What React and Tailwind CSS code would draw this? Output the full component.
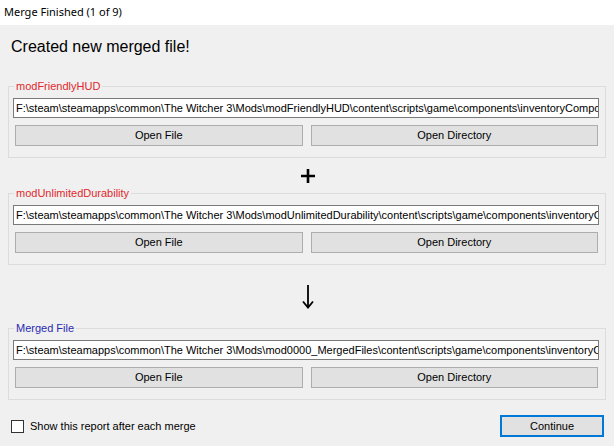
import React, { useState } from "react";

const groups = [
  {
    label: "modFriendlyHUD",
    color: "text-[#e0282e]",
    path: "F:\\steam\\steamapps\\common\\The Witcher 3\\Mods\\modFriendlyHUD\\content\\scripts\\game\\components\\inventoryCompo",
  },
  {
    label: "modUnlimitedDurability",
    color: "text-[#e0282e]",
    path: "F:\\steam\\steamapps\\common\\The Witcher 3\\Mods\\modUnlimitedDurability\\content\\scripts\\game\\components\\inventoryC",
  },
  {
    label: "Merged File",
    color: "text-[#2a2ab0]",
    path: "F:\\steam\\steamapps\\common\\The Witcher 3\\Mods\\mod0000_MergedFiles\\content\\scripts\\game\\components\\inventoryC",
  },
];

function FileGroup({ group }) {
  return (
    <div className="relative mx-[8px] border border-[#dcdcdc] pt-[11px] pb-[11px]">
      <span
        className={`absolute left-[5px] top-[-8px] bg-[#f0f0f0] px-[2px] text-[11px] leading-[14px] ${group.color}`}
      >
        {group.label}
      </span>
      <div className="ml-[4px] mr-[6px] h-[20px] overflow-hidden whitespace-nowrap border border-[#7a7a7a] bg-white pl-[2px] text-[11px] leading-[18px] text-black">
        {group.path}
      </div>
      <div className="mt-[7px] flex gap-[8px] pl-[6px] pr-[7px]">
        <button className="h-[21px] flex-1 border border-[#adadad] bg-[#e1e1e1] text-[11px] text-black">
          Open File
        </button>
        <button className="h-[21px] flex-1 border border-[#adadad] bg-[#e1e1e1] text-[11px] text-black">
          Open Directory
        </button>
      </div>
    </div>
  );
}

export default function App() {
  const [showReport, setShowReport] = useState(false);

  return (
    <div
      className="h-[446px] w-[614px] overflow-hidden bg-[#f0f0f0] text-black"
      style={{ fontFamily: '"Liberation Sans", Arial, sans-serif' }}
    >
      {/* Title bar */}
      <div
        className="flex h-[25px] items-center bg-white pl-[4px] text-[11px]"
        style={{ fontFamily: '"Noto Sans", "Open Sans", sans-serif' }}
      >
        Merge Finished (1 of 9)
      </div>

      {/* Heading */}
      <div className="h-[61px] pl-[11px] pt-[12px] text-[16px] leading-[20px]">
        Created new merged file!
      </div>

      <FileGroup group={groups[0]} />

      <div className="flex h-[35px] items-center justify-center pl-[1px]">
        <svg width="14" height="14" viewBox="0 0 14 14">
          <path d="M7 0v14M0 7h14" stroke="#000" strokeWidth="2.6" />
        </svg>
      </div>

      <FileGroup group={groups[1]} />

      <div className="flex h-[63px] items-center justify-center pl-[1px]">
        <svg width="14" height="24" viewBox="0 0 14 24">
          <path d="M7 0v22" stroke="#000" strokeWidth="1.8" />
          <path d="M2 16.5l5 6 5-6" stroke="#000" strokeWidth="1.8" fill="none" />
        </svg>
      </div>

      <FileGroup group={groups[2]} />

      {/* Footer */}
      <div className="mt-[15px] flex items-center justify-between pl-[11px] pr-[10px]">
        <label className="flex items-center gap-[6px] text-[11px]">
          <input
            type="checkbox"
            checked={showReport}
            onChange={(e) => setShowReport(e.target.checked)}
            className="h-[13px] w-[13px] appearance-none border border-[#333] bg-white"
          />
          Show this report after each merge
        </label>
        <button className="h-[22px] w-[104px] border-2 border-[#0078d7] bg-[#e1e1e1] text-[11px]">
          Continue
        </button>
      </div>
    </div>
  );
}
